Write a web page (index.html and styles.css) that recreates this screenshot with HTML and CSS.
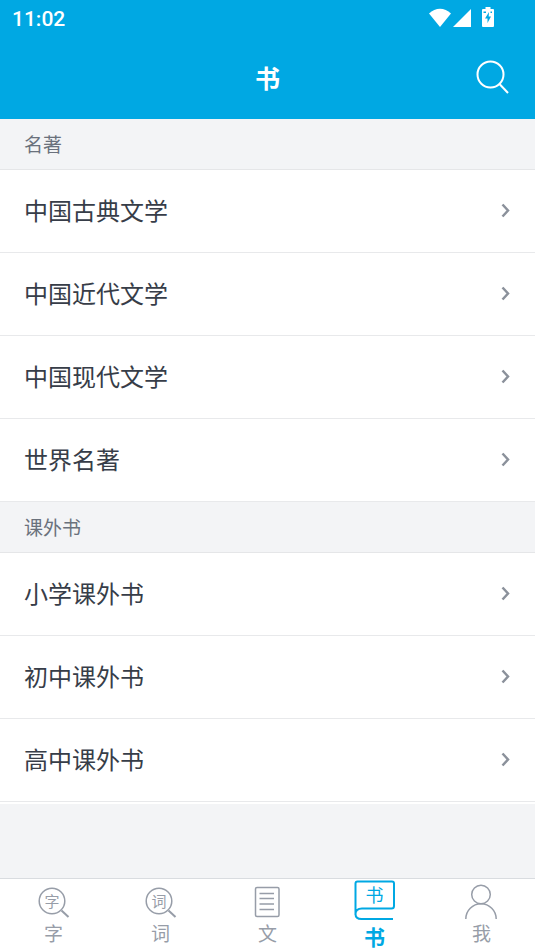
FILE: index.html
```html
<!DOCTYPE html>
<html lang="zh-CN">
<head>
<meta charset="utf-8">
<meta name="viewport" content="width=device-width, initial-scale=1">
<title>书</title>
<link rel="stylesheet" href="styles.css">
</head>
<body>
<header class="top">
  <div class="status">
    <time class="clock">11:02</time>
    <div class="status-icons">
      <svg class="wifi" viewBox="0 0 22 19" width="22" height="19" aria-hidden="true"><path d="M0 5.500C6.500-1 15.500-1 22 5.500L11 19Z"/></svg>
      <svg class="signal" viewBox="0 0 18 18" width="18" height="18" aria-hidden="true"><path d="M18 0V18H0Z"/></svg>
      <svg class="battery" viewBox="0 0 12 20" width="12" height="20" aria-hidden="true"><path fill-rule="evenodd" d="M3.500 0h5v2H11q1 0 1 1v16q0 1-1 1H1q-1 0-1-1V3q0-1 1-1h2.500ZM7 5 3 11.500h2.500V16L9 9.500H6.700ZM1.500 4.500v1.500h2.500V4.500ZM8.500 4.500v1.500h1.500V4.500Z"/></svg>
    </div>
  </div>
  <div class="titlebar">
    <h1 class="title">书</h1>
    <button class="search" type="button" aria-label="搜索">
      <svg viewBox="0 0 34 34" width="34" height="34" aria-hidden="true"><circle cx="14.500" cy="14.500" r="13"/><path d="M23.500 24 32 33"/></svg>
    </button>
  </div>
</header>

<main class="content">
  <section>
    <h2 class="group">名著</h2>
    <ul class="list">
      <li><a class="row" href="#">中国古典文学<svg class="arrow" viewBox="0 0 9 14" width="9" height="14" aria-hidden="true"><path d="M1.500 1.500 7 7.500 1.500 13.500"/></svg></a></li>
      <li><a class="row" href="#">中国近代文学<svg class="arrow" viewBox="0 0 9 14" width="9" height="14" aria-hidden="true"><path d="M1.500 1.500 7 7.500 1.500 13.500"/></svg></a></li>
      <li><a class="row" href="#">中国现代文学<svg class="arrow" viewBox="0 0 9 14" width="9" height="14" aria-hidden="true"><path d="M1.500 1.500 7 7.500 1.500 13.500"/></svg></a></li>
      <li><a class="row" href="#">世界名著<svg class="arrow" viewBox="0 0 9 14" width="9" height="14" aria-hidden="true"><path d="M1.500 1.500 7 7.500 1.500 13.500"/></svg></a></li>
    </ul>
  </section>
  <section class="last">
    <h2 class="group">课外书</h2>
    <ul class="list">
      <li><a class="row" href="#">小学课外书<svg class="arrow" viewBox="0 0 9 14" width="9" height="14" aria-hidden="true"><path d="M1.500 1.500 7 7.500 1.500 13.500"/></svg></a></li>
      <li><a class="row" href="#">初中课外书<svg class="arrow" viewBox="0 0 9 14" width="9" height="14" aria-hidden="true"><path d="M1.500 1.500 7 7.500 1.500 13.500"/></svg></a></li>
      <li><a class="row" href="#">高中课外书<svg class="arrow" viewBox="0 0 9 14" width="9" height="14" aria-hidden="true"><path d="M1.500 1.500 7 7.500 1.500 13.500"/></svg></a></li>
    </ul>
  </section>
</main>

<nav class="tabs">
  <a class="tab" href="#">
    <svg viewBox="0 0 41 40" width="41" height="40" aria-hidden="true"><circle cx="19" cy="21" r="12.800"/><path class="handle" d="M28.500 30.500 35.500 37"/><text x="19" y="26.500" font-size="15">字</text></svg>
    <span>字</span>
  </a>
  <a class="tab" href="#">
    <svg viewBox="0 0 41 40" width="41" height="40" aria-hidden="true"><circle cx="19" cy="21" r="12.800"/><path class="handle" d="M28.500 30.500 35.500 37"/><text x="19" y="26.500" font-size="15">词</text></svg>
    <span>词</span>
  </a>
  <a class="tab" href="#">
    <svg viewBox="0 0 41 40" width="41" height="40" aria-hidden="true"><rect x="8.500" y="7.500" width="23.500" height="29" rx="1.500"/><path d="M12.500 13.500h14.500M12.500 18.500h14.500M12.500 24h14.500M12.500 29.500h14.500"/></svg>
    <span>文</span>
  </a>
  <a class="tab active" href="#" aria-current="page">
    <svg viewBox="0 0 41 40" width="41" height="40" aria-hidden="true"><path d="M1.500 35V3.500q0-2 2-2h34.500q2 0 2 2v22.500q0 2.500-2.500 2.500H8q-6.500 0-6.500 5.500 0 5 6 5h31.500"/><text x="20.500" y="22" font-size="18">书</text></svg>
    <span>书</span>
  </a>
  <a class="tab" href="#">
    <svg viewBox="0 0 41 40" width="41" height="40" aria-hidden="true"><circle cx="20" cy="14.500" r="9.300"/><path d="M4.800 39a15.200 15.200 0 0 1 30.400 0"/></svg>
    <span>我</span>
  </a>
</nav>
</body>
</html>
```
FILE: styles.css
```css
* {
  box-sizing: border-box;
}

body {
  margin: 0;
  min-height: 100vh;
  display: flex;
  flex-direction: column;
  background: #f3f4f6;
  color: #373d48;
  font-family: "Noto Sans CJK SC", sans-serif;
}

a {
  color: inherit;
  text-decoration: none;
}

.top {
  background: #00a8e3;
  color: #fff;
}

.status {
  display: flex;
  justify-content: space-between;
  align-items: center;
  height: 36px;
  padding: 0 41px 0 12px;
}

.clock {
  font: 500 21px/36px Roboto, sans-serif;
  padding-top: 2px;
}

.status-icons {
  display: flex;
  align-items: flex-end;
  padding-bottom: 2px;
  fill: #fff;
}

.signal {
  margin: 0 11px 0 2px;
}

.titlebar {
  display: grid;
  grid-template-columns: 1fr auto 1fr;
  align-items: center;
  height: 83px;
  padding: 0 25px 2px;
}

.title {
  grid-column: 2;
  margin: 0;
  font-size: 25px;
  line-height: 34px;
  font-weight: 700;
}

.search {
  justify-self: end;
  padding: 0;
  border: 0;
  background: none;
  line-height: 0;
}

.search svg {
  fill: none;
  stroke: #fff;
  stroke-width: 2;
}

.content {
  flex: 1;
}

.group {
  margin: 0;
  height: 51px;
  padding: 0 24px;
  border-bottom: 1px solid #e5e6e8;
  color: #6a717c;
  font-size: 19px;
  line-height: 50px;
  font-weight: 400;
}

.list {
  margin: 0;
  padding: 0;
  list-style: none;
  background: #fff;
}

.last .list {
  padding-bottom: 2px;
}

.row {
  display: flex;
  justify-content: space-between;
  align-items: center;
  height: 83px;
  padding: 0 25px 2px 24px;
  border-bottom: 1px solid #e8e9eb;
  font-size: 24px;
  line-height: 36px;
}

.arrow {
  overflow: visible;
  fill: none;
  stroke: #8b919b;
  stroke-width: 2.5;
}

.tabs {
  display: flex;
  height: 73px;
  border-top: 1px solid #d9dce0;
  background: #fff;
}

.tab {
  flex: 1;
  display: flex;
  flex-direction: column;
  align-items: center;
  padding-top: 1px;
  color: #979da8;
  font-size: 19px;
  line-height: 26px;
}

.tab svg {
  flex: none;
  fill: none;
  stroke: currentColor;
  stroke-width: 1.5;
}

.tab .handle {
  stroke-width: 2;
}

.tab text {
  fill: currentColor;
  stroke: none;
  text-anchor: middle;
}

.active {
  color: #00a8e3;
  font-size: 21px;
  line-height: 32px;
  font-weight: 700;
}

.active svg {
  stroke-width: 2;
  font-weight: 400;
}
```
